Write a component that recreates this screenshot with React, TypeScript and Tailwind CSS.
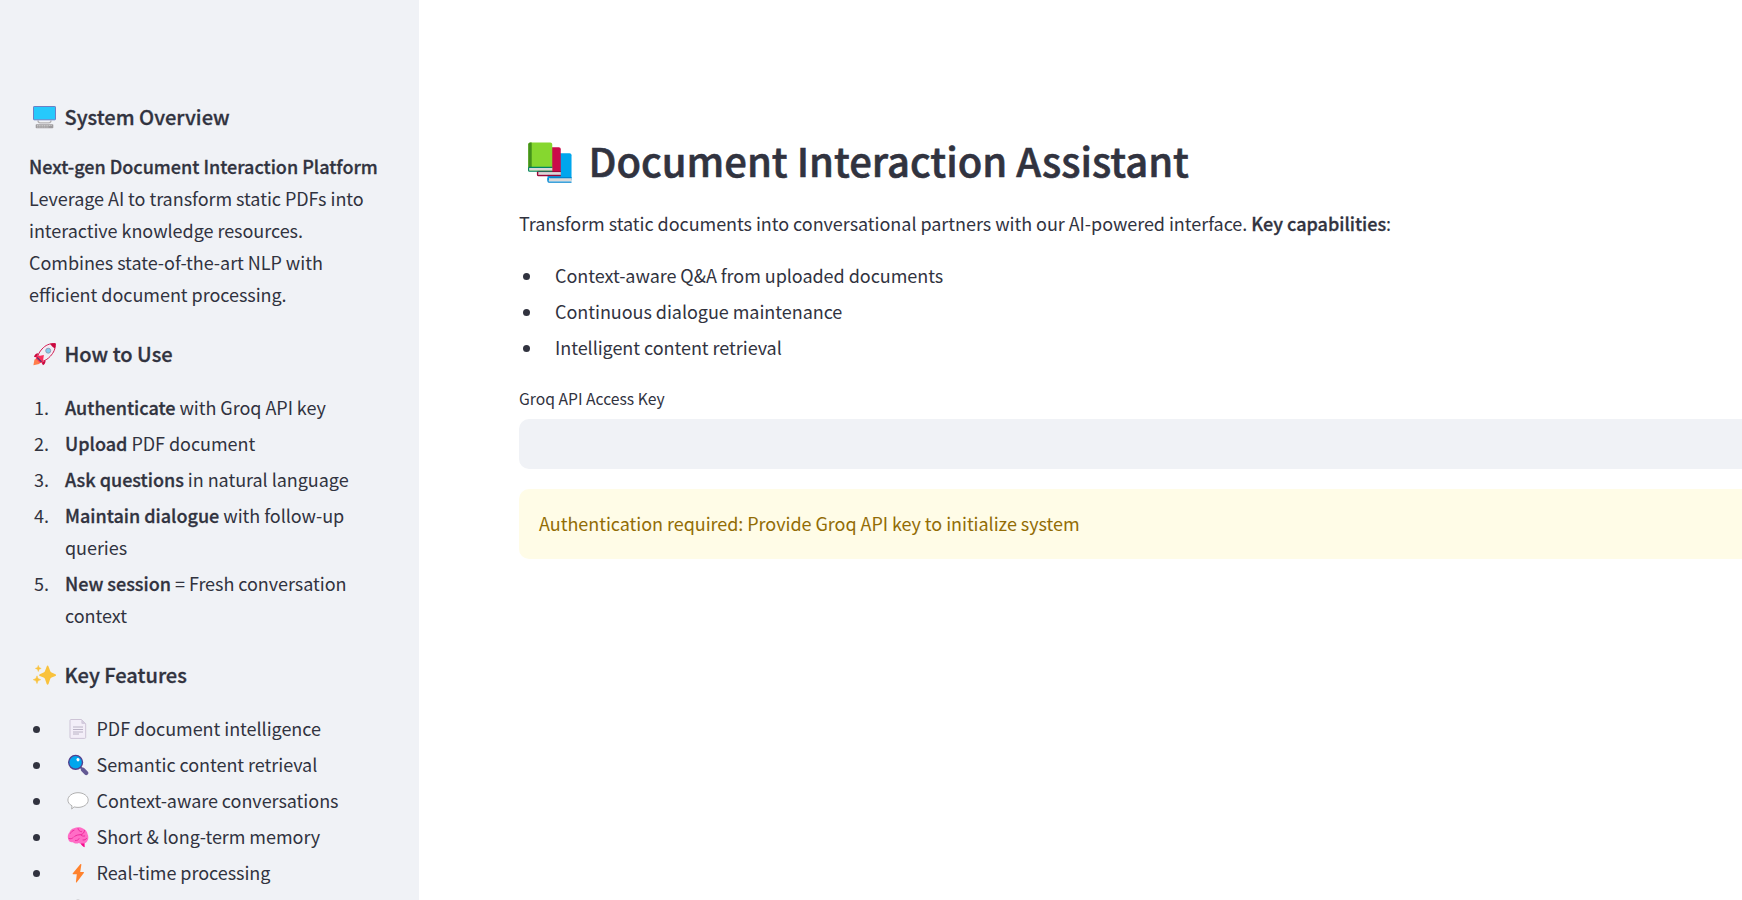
import type { ReactNode } from "react";

function MonitorIcon() {
  return (
    <svg className="mt-[2px] mr-[8.5px] ml-1 h-[23px] w-[23px] shrink-0" viewBox="0 0 23 23">
      <path d="M5 14.500c0 2.200 1 2.300 2.200 2.300h8.600c1.200 0 2.200-.1 2.200-2.300" fill="none" stroke="#b4b2b4" strokeWidth="1.300" />
      <rect x=".5" y=".5" width="22" height="13.300" rx=".6" fill="#26c9fc" stroke="#6d7fc4" />
      <rect x="2.700" y="18.200" width="17.600" height="4" rx=".8" fill="#9e9c9e" />
      <path d="M4 19.500h15M4 21h11.500" stroke="#d3d3d3" strokeWidth=".8" strokeDasharray="1.200 .5" />
    </svg>
  );
}

function RocketIcon() {
  return (
    <svg className="mt-[1px] mr-[8.5px] ml-1 h-[23px] w-[23px] shrink-0" viewBox="0 0 23 23">
      <path d="M1.500 16.500 5 15l3.300 3.500-2.200 2.600L.4 22.300z" fill="#ff7d4b" />
      <path d="M5.200 10.200c-2 .1-3.800 1.400-4.200 3.800l3 .2zM12.600 17.500c0 2.300-1 3.900-2.600 4.800l-1.500-2.900z" fill="#c9093f" />
      <path d="M22.300.7c-5.600-.6-10 1.600-13.300 5.300-2.300 2.600-4 5.400-4.500 8.300l4 4.200c3.200-.6 6.300-2.400 8.800-5.200 3.300-3.600 5.400-7.600 5-12.600z" fill="#f1ecf4" stroke="#d41b51" strokeWidth="1" />
      <path d="M22.600.4c-2-.3-3.800-.1-5.400.4 1.200 2 2.700 3.600 4.600 4.700.7-1.700.9-3.400.8-5.100z" fill="#c9093f" />
      <path d="m3.800 12.600 3.300.2 3.800-.8-.6 4-.2 3.200-3 .7-4.400-4.500z" fill="#f92f5c" />
      <path d="m4.200 14.500 4.300 4.300" stroke="#533566" strokeWidth="1.200" />
      <circle cx="15.200" cy="7.700" r="2.500" fill="#83cbec" stroke="#8892aa" strokeWidth=".8" />
    </svg>
  );
}

function SparklesIcon() {
  return (
    <svg className="mt-[2px] mr-[8.5px] ml-1 h-[23px] w-[23px] shrink-0" viewBox="0 0 23 23" fill="#f9c23c">
      <path d="M13.700 2.400c.5-1.200 1.300-1.200 1.800 0l1.700 4.700c.3.700.7 1.200 1.400 1.500l3.800 1.700c.9.500.9 1.300 0 1.700l-3.800 1.600c-.7.300-1.100.8-1.400 1.500l-1.700 4.900c-.5 1.100-1.300 1.100-1.800 0L12 15.100c-.3-.7-.7-1.200-1.400-1.500L6.800 12c-.9-.4-.9-1.200 0-1.700l3.800-1.700c.7-.3 1.100-.8 1.400-1.500z" />
      <path d="M5.300 1.400 6 3.500l2.200.9L6 5.300l-.7 2.200-.8-2.200-2.100-.9 2.100-.9zM4 11.800l1 2.700 2.700 1.200L5 16.800l-1 2.800-1.100-2.800L.2 15.700l2.700-1.200z" stroke="#f9c23c" strokeWidth=".5" strokeLinejoin="round" />
    </svg>
  );
}

function PageIcon() {
  return (
    <svg className="h-[22px] w-[22px] shrink-0" viewBox="0 0 22 22">
      <path d="M4 1.500h10.500l4.200 4.300v13.600c0 .6-.4 1-1 1H4c-.6 0-1-.4-1-1v-17c0-.5.4-.9 1-.9z" fill="#f3eef8" stroke="#cdc4d6" />
      <path d="M14.300 1.500v3.300c0 .7.400 1.100 1.100 1.100h3.300z" fill="#d3cbdd" />
      <path d="M6 9h10M6 11.500h10M6 14h10M6 16h6" stroke="#b4abc0" strokeWidth=".9" />
    </svg>
  );
}

function SearchIcon() {
  return (
    <svg className="h-[22px] w-[22px] shrink-0" viewBox="0 0 22 22">
      <path d="m13.600 13.200 2 2" stroke="#635994" strokeWidth="2.200" />
      <path d="m16 15.800 3.200 3.200" stroke="#635994" strokeWidth="4.200" strokeLinecap="round" />
      <circle cx="8.600" cy="8.300" r="6.900" fill="#00a6ed" stroke="#533f8e" strokeWidth="1.400" />
      <ellipse cx="11" cy="5.700" rx="1.500" ry="1.700" fill="#fff" transform="rotate(-35 11 5.700)" />
    </svg>
  );
}

function SpeechIcon() {
  return (
    <svg className="h-[22px] w-[22px] shrink-0" viewBox="0 0 22 22">
      <path d="M11 2.700c5.600 0 10.200 3.300 10.200 7.400s-4.600 7.300-10.200 7.300c-1.400 0-2.700-.2-3.900-.5L4.700 19l.3-3.200c-2.500-1.300-4.100-3.400-4.100-5.700C.9 6 5.400 2.700 11 2.700z" fill="#fff" stroke="#b0b0b0" strokeWidth="1" strokeLinejoin="round" />
    </svg>
  );
}

function BrainIcon() {
  return (
    <svg className="h-[22px] w-[22px] shrink-0" viewBox="0 0 22 22">
      <path d="m13 16.500 4.500-.5.200 5.200c-1.700-.3-3.200-1.700-4.700-4.700z" fill="#f70a8d" />
      <path d="M7 2.300C9.500.8 13.500.8 16 2.400c2.500 1 4.300 3.300 4.700 6 1 2 .9 4.800-.4 6.600-.8 1.800-2.500 2.700-4.700 2.400-1.400.4-2.600.2-3.800-.4-2 .9-4.500.6-5.900-.8-2.400.5-4.400-.9-4.700-3.200-.9-2.500-.3-5 1.200-6.600C3 4.300 4.800 2.700 7 2.300z" fill="#ff6dc6" />
      <path d="M3.500 7.300c.8-1.700 2-2.600 3.500-3M11 2.500c.4 2 1.600 3 3.500 3.200M17.500 4.500c-.2 2.200-1.500 3.800-4 4.200-2.200.2-4 .2-5.800 1.600M13.500 8.700c1 1.300 2.500 1.700 4.200 1.300M2 12.500c1.700.7 3 .2 4.200-1M8.500 14.500c1.700.2 2.800-.5 3.500-1.800M16 14c1.600.2 2.700-.4 3.500-1.500" fill="none" stroke="#ef2a9d" strokeWidth="1" strokeLinecap="round" />
    </svg>
  );
}

function BoltIcon() {
  return (
    <svg className="h-[22px] w-[22px] shrink-0" viewBox="0 0 22 22">
      <path d="M13.300 2.200 5.800 11.300c-.3.500-.1 1 .5 1h3.500l-.9 7.600c0 .7.500.9.900.4l7-9.300c.3-.5.1-1-.5-1h-3.100l1.200-7.400c.1-.7-.6-1-1.100-.4z" fill="#ff822d" />
    </svg>
  );
}

function LockIcon() {
  return (
    <svg className="mt-[1px] h-[22px] w-[22px] shrink-0" viewBox="0 0 22 22">
      <path d="M7.500 10V5a3.500 3.500 0 0 1 7 0v5" fill="none" stroke="#b4b4bb" strokeWidth="2" />
      <rect x="4" y="9.500" width="14" height="11" rx="1.500" fill="#f9c23c" />
    </svg>
  );
}

function BooksIcon() {
  return (
    <svg className="mt-[4px] mr-4 ml-[8.5px] h-[43px] w-[45px] shrink-0" viewBox="0 0 46 43">
      <path d="M22 12h20.500c1.100 0 2 .9 2 2v26H20V14z" fill="#00a6ed" />
      <path d="M21.500 37.300H44.500v3.200H21.500z" fill="#d9d8d8" />
      <path d="M20.400 37v3.500c0 .7.400 1 1 1h23.100M22 37h22.500" fill="none" stroke="#0084ce" strokeWidth="1.200" />
      <path d="M11 6h20.500c1.100 0 2 .9 2 2v26H10V8z" fill="#ca0b4a" />
      <path d="M10.500 31.300h23v2.700h-23z" fill="#d9d8d8" />
      <path d="M9.700 30.500V34c0 .7.400 1 1 1h22.800" fill="none" stroke="#990838" strokeWidth="1.200" />
      <path d="M11 30.700h22.500" stroke="#990838" strokeWidth="1" />
      <path d="M2.300 1h20.500c1.100 0 2 .9 2 2v27H.3V3c0-1.100.9-2 2-2z" fill="#86d72f" />
      <path d="M.3 27V3c0-1.100.9-2 2-2h1.500v26z" fill="#44911b" />
      <path d="M1 27h23.800v2.800H1z" fill="#d9d8d8" />
      <path d="M.6 26.500v3c0 .7.400 1 1 1h23.200M1 26.500h23.800" fill="none" stroke="#008463" strokeWidth="1.100" />
    </svg>
  );
}

const steps: [string, string][] = [
  ["Authenticate", " with Groq API key"],
  ["Upload", " PDF document"],
  ["Ask questions", " in natural language"],
  ["Maintain dialogue", " with follow-up queries"],
  ["New session", " = Fresh conversation context"],
];

const features: [ReactNode, string][] = [
  [<PageIcon />, "PDF document intelligence"],
  [<SearchIcon />, "Semantic content retrieval"],
  [<SpeechIcon />, "Context-aware conversations"],
  [<BrainIcon />, "Short & long-term memory"],
  [<BoltIcon />, "Real-time processing"],
  [<LockIcon />, ""],
];

const capabilities = [
  "Context-aware Q&A from uploaded documents",
  "Continuous dialogue maintenance",
  "Intelligent content retrieval",
];

function Strong({ children }: { children: ReactNode }) {
  return <strong className="font-medium tracking-normal [-webkit-text-stroke:0.3px]">{children}</strong>;
}

function SideHeading({ icon, children }: { icon: ReactNode; children: ReactNode }) {
  return (
    <h3 className="flex h-[27px] items-center text-[20.050px] leading-[27px] font-medium tracking-normal whitespace-nowrap [-webkit-text-stroke:0.3px]">
      {icon}
      {children}
    </h3>
  );
}

function Bullet() {
  return <span className="mt-[14px] h-[7px] w-[7px] shrink-0 rounded-full bg-[#31333f]" />;
}

export default function App() {
  return (
    <div className="flex h-[900px] w-[1742px] overflow-hidden bg-white font-['Noto_Sans_CJK_SC','Noto_Sans',sans-serif] text-[18px] leading-8 tracking-[-0.045px] text-[#31333f]">
      <aside className="h-[900px] w-[419px] shrink-0 overflow-hidden bg-[#f0f2f6] pt-[103px] pr-6 pl-[29px]">
        <SideHeading icon={<MonitorIcon />}>System Overview</SideHeading>
        <p className="mt-5 whitespace-nowrap">
          <Strong>Next-gen Document Interaction Platform</Strong>
          <br />
          Leverage AI to transform static PDFs into
          <br />
          interactive knowledge resources.
          <br />
          Combines state-of-the-art NLP with
          <br />
          <span className="tracking-normal">efficient</span> document processing.
        </p>

        <div className="mt-[30px]">
          <SideHeading icon={<RocketIcon />}>How to Use</SideHeading>
        </div>
        <ol className="mt-6 flex flex-col gap-1">
          {steps.map(([title, rest], i) => (
            <li key={title} className="flex">
              <span className="w-9 shrink-0 pl-[5px]">{i + 1}.</span>
              <span className="w-[300px]">
                <Strong>{title}</Strong>
                {rest}
              </span>
            </li>
          ))}
        </ol>

        <div className="mt-[30px]">
          <SideHeading icon={<SparklesIcon />}>Key Features</SideHeading>
        </div>
        <ul className="mt-6 flex flex-col gap-1">
          {features.map(([icon, text], i) => (
            <li key={i} className="flex h-8 pl-1">
              <Bullet />
              <span className="mt-[6px] ml-[27px] flex h-[22px] w-[29.5px] shrink-0">{icon}</span>
              <span className="whitespace-nowrap">{text}</span>
            </li>
          ))}
        </ul>
      </aside>

      <main className="w-[1323px] shrink-0 overflow-hidden pt-[133px] pl-[100px]">
        <h1 className="flex h-[54px] items-center text-[40px] leading-[54px] font-medium tracking-normal whitespace-nowrap [-webkit-text-stroke:0.6px]">
          <BooksIcon />
          Document Interaction Assistant
        </h1>
        <p className="mt-5 whitespace-nowrap">
          Transform static documents into conversational partners with our AI-powered interface.{" "}
          <Strong>Key capabilities</Strong>:
        </p>
        <ul className="mt-5 flex flex-col gap-1">
          {capabilities.map((text) => (
            <li key={text} className="flex pl-1">
              <Bullet />
              <span className="ml-[25px]">{text}</span>
            </li>
          ))}
        </ul>
        <label className="mt-[22px] block h-[34px] text-[15.7px] leading-7 tracking-normal" htmlFor="api-key">
          Groq API Access Key
        </label>
        <input
          id="api-key"
          type="password"
          className="block h-[50px] w-[1300px] rounded-[10px] bg-[#f0f2f6] px-5 outline-none"
        />
        <div className="mt-5 h-[70px] w-[1300px] rounded-[10px] bg-[#fffce7] pt-[18px] pl-5 text-[#926c05]">
          Authentication required: Provide Groq API key to initialize system
        </div>
      </main>
    </div>
  );
}
